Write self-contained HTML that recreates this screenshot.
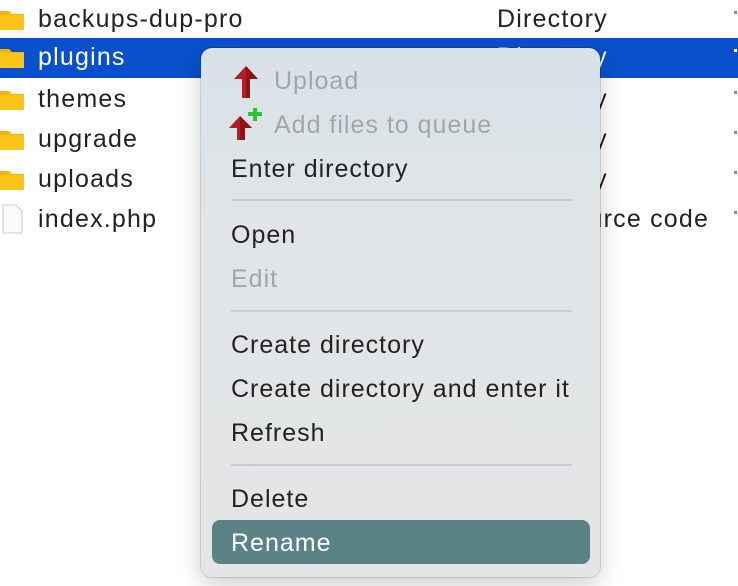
<!DOCTYPE html>
<html><head><style>
body{margin:0;width:738px;height:586px;overflow:hidden;background:#fff;font-family:"Liberation Sans",sans-serif;position:relative}
.row{position:absolute;left:0;width:738px;height:40px;font-size:25px;letter-spacing:1.2px;color:#222}
.row .n{position:absolute;left:38px;top:5px}
.row .t{position:absolute;left:497px;top:5px}
.row .d{position:absolute;left:734px;top:11px;width:3px;height:3px;background:#888}
.sel{background:#0a50cc;color:#fff}
.sel .d{background:#fff}
.fold{position:absolute;left:0;top:8px;width:24px;height:22px}
.menu{position:absolute;left:201px;top:48px;width:399px;height:529px;border-radius:11px;background:linear-gradient(#d7e2e8,#e2e5e7 35%,#e3e5e6);box-shadow:0 0 0 1px rgba(0,0,0,.12),0 8px 24px rgba(0,0,0,.2)}
.it{position:absolute;left:30px;font-size:25px;letter-spacing:1px;color:#222}
.dis{color:#a3a6a8}
.sep{position:absolute;left:30px;width:341px;height:2px;background:#c9cccf}
.hl{position:absolute;left:11px;top:472px;width:378px;height:44px;border-radius:8px;background:#5b8385}
</style></head><body>
<div class="row" style="top:0"><svg class="fold" viewBox="0 0 24 22"><path d="M0 3h9l3 3h12v16H0z" fill="#f5b400"/><path d="M0 7h24v15H0z" fill="#fdc51a"/></svg><span class="n">backups-dup-pro</span><span class="t">Directory</span><i class="d"></i></div>
<div class="row sel" style="top:38px"><svg class="fold" viewBox="0 0 24 22"><path d="M0 3h9l3 3h12v16H0z" fill="#f5b400"/><path d="M0 7h24v15H0z" fill="#fdc51a"/></svg><span class="n">plugins</span><span class="t">Directory</span><i class="d"></i></div>
<div class="row" style="top:80px"><svg class="fold" viewBox="0 0 24 22"><path d="M0 3h9l3 3h12v16H0z" fill="#f5b400"/><path d="M0 7h24v15H0z" fill="#fdc51a"/></svg><span class="n">themes</span><span class="t">Directory</span><i class="d"></i></div>
<div class="row" style="top:120px"><svg class="fold" viewBox="0 0 24 22"><path d="M0 3h9l3 3h12v16H0z" fill="#f5b400"/><path d="M0 7h24v15H0z" fill="#fdc51a"/></svg><span class="n">upgrade</span><span class="t">Directory</span><i class="d"></i></div>
<div class="row" style="top:160px"><svg class="fold" viewBox="0 0 24 22"><path d="M0 3h9l3 3h12v16H0z" fill="#f5b400"/><path d="M0 7h24v15H0z" fill="#fdc51a"/></svg><span class="n">uploads</span><span class="t">Directory</span><i class="d"></i></div>
<div class="row" style="top:200px"><svg class="fold" viewBox="0 0 24 30" style="top:4px;height:30px"><path d="M3 1h13l6 6v22H3z" fill="#fafafa" stroke="#ccc"/></svg><span class="n">index.php</span><span class="t">PHP source code</span><i class="d"></i></div>
<div class="menu">
<svg style="position:absolute;left:32px;top:18px" width="26" height="32" viewBox="0 0 26 32"><path d="M13 0L25 13H17V32H9V13H1z" fill="#b81c22"/><path d="M13 0L25 13H17V32H13z" fill="#8e1217"/></svg>
<div class="it dis" style="top:19px;left:73px">Upload</div>
<svg style="position:absolute;left:27px;top:60px" width="36" height="32" viewBox="0 0 36 32"><path d="M12 8L24 20H17V32H9V20H1z" fill="#b81c22"/><path d="M12 8L24 20H17V32H12z" fill="#8e1217"/><path d="M20 4h5V0h4v4h5v4h-5v5h-4V8h-5z" fill="#2ec32e"/></svg>
<div class="it dis" style="top:63px;left:73px">Add files to queue</div>
<div class="it" style="top:107px">Enter directory</div>
<div class="sep" style="top:151px"></div>
<div class="it" style="top:173px">Open</div>
<div class="it dis" style="top:217px">Edit</div>
<div class="sep" style="top:262px"></div>
<div class="it" style="top:283px">Create directory</div>
<div class="it" style="top:327px">Create directory and enter it</div>
<div class="it" style="top:371px">Refresh</div>
<div class="sep" style="top:416px"></div>
<div class="it" style="top:437px">Delete</div>
<div class="hl"></div>
<div class="it" style="top:481px;color:#fff">Rename</div>
</div>
</body></html>
